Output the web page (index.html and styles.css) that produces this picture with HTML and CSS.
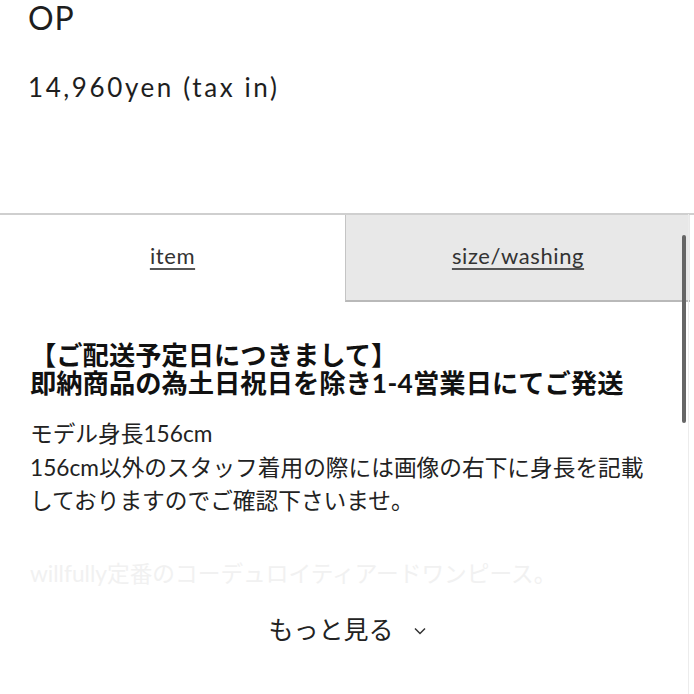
FILE: index.html
```html
<!DOCTYPE html>
<html lang="ja">
<head>
<meta charset="utf-8">
<link rel="stylesheet" href="styles.css">
</head>
<body>
<div class="page">
  <header class="head">
    <h1 class="title">OP</h1>
    <p class="price">14,960yen (tax in)</p>
  </header>
  <nav class="tabs">
    <div class="tab active"><span class="tab-label">item</span></div>
    <div class="tab"><span class="tab-label">size/washing</span></div>
  </nav>
  <section class="content">
    <h2 class="notice"><span class="line">【ご配送予定日につきまして】</span><span class="line">即納商品の為土日祝日を除き<span class="num">1-4</span>営業日にてご発送</span></h2>
    <p class="desc">モデル身長156cm<br>156cm以外のスタッフ着用の際には画像の右下に身長を記載<br>しておりますのでご確認下さいませ。</p>
    <p class="desc faded">willfully定番のコーデュロイティアードワンピース。</p>
    <div class="more"><span>もっと見る</span><svg class="chev" viewBox="0 0 12 8" width="12" height="8"><path d="M1 1.5 L6 6.5 L11 1.5" fill="none" stroke="#333" stroke-width="1.5"/></svg></div>
  </section>
  <div class="scroll-track"></div>
  <div class="scroll-thumb"></div>
</div>
</body>
</html>
```

FILE: styles.css
```css
html, body {
  margin: 0;
  padding: 0;
  background: #fff;
}
.page {
  position: relative;
  width: 694px;
  height: 694px;
  overflow: hidden;
  font-family: "Lato", "Noto Sans CJK JP", sans-serif;
  color: #1e1e1e;
}
.head {
  padding: 0 0 0 28px;
  height: 214px;
  box-sizing: border-box;
}
.title {
  margin: 0;
  font-size: 32px;
  font-weight: 400;
  line-height: 38px;
  letter-spacing: 1px;
  margin-top: -1px;
}
.price {
  margin: 35px 0 0;
  font-size: 26px;
  line-height: 30px;
  letter-spacing: 2.6px;
}
.tabs {
  display: grid;
  grid-template-columns: 345px 345px;
  height: 87px;
  border-top: 2px solid #cfcfcf;
}
.tab {
  display: flex;
  align-items: center;
  justify-content: center;
  font-size: 22px;
  letter-spacing: 0.6px;
  color: #333;
  padding-bottom: 6px;
}
.tab + .tab {
  background: #e8e8e8;
  border-left: 1px solid #c4c4c4;
  border-bottom: 2px solid #b9b9b9;
  padding-bottom: 4px;
}
.tab-label {
  text-decoration: underline;
  text-decoration-color: #555;
  text-underline-offset: 4px;
}
.content {
  padding: 38px 30px 0 30px;
}
.notice {
  margin: 0;
  font-size: 26.3px;
  font-weight: 700;
  letter-spacing: 0;
  color: #111;
  font-family: "Noto Sans CJK JP", sans-serif;
}
.line {
  display: block;
  line-height: 28px;
}
.num {
  font-family: "Lato", sans-serif;
  letter-spacing: 0.3px;
}
.desc {
  margin: 20px 0 0;
  font-size: 22.7px;
  line-height: 33.5px;
  color: #222;
  font-family: "Lato", "Noto Sans CJK JP", sans-serif;
}
.faded {
  margin-top: 39px;
  color: #f1f1f1;
}
.more {
  display: flex;
  align-items: center;
  justify-content: center;
  gap: 20px;
  margin-top: 20px;
  font-size: 25px;
  color: #222;
  font-family: "Noto Sans CJK JP", sans-serif;
}
.chev {
  margin-top: 5px;
}
.scroll-track {
  position: absolute;
  left: 688px;
  top: 214px;
  width: 1px;
  height: 480px;
  background: #ececec;
}
.scroll-thumb {
  position: absolute;
  left: 682px;
  top: 235px;
  width: 4px;
  height: 188px;
  border-radius: 2px;
  background: #666;
}
```
